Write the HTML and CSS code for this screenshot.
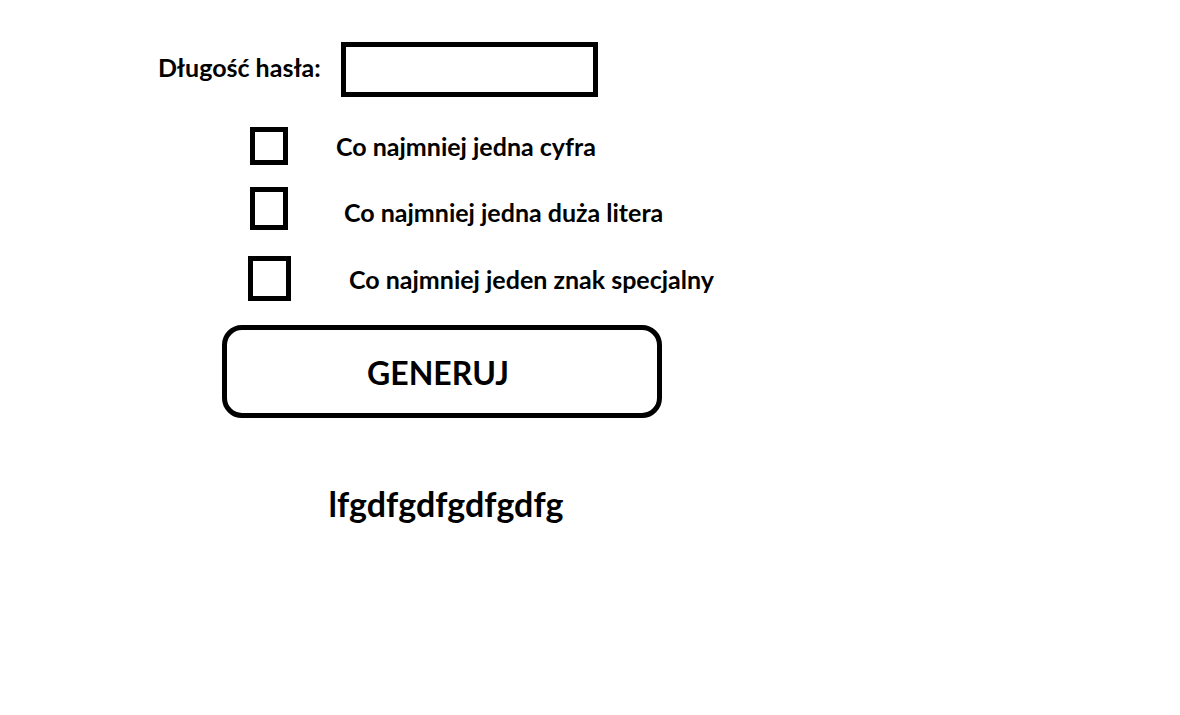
FILE: index.html
```html
<!DOCTYPE html>
<html lang="pl">
<head>
<meta charset="utf-8">
<title>Generator haseł</title>
<link rel="stylesheet" href="styles.css">
</head>
<body>
<form class="generator">
  <div class="length-row">
    <label class="label" for="length">Długość hasła:</label>
    <input class="length-input" id="length" type="text">
  </div>
  <div class="options">
    <div class="option option-digit">
      <input class="box" id="digit" type="checkbox">
      <label class="label" for="digit">Co najmniej jedna cyfra</label>
    </div>
    <div class="option option-upper">
      <input class="box" id="upper" type="checkbox">
      <label class="label" for="upper">Co najmniej jedna duża litera</label>
    </div>
    <div class="option option-special">
      <input class="box" id="special" type="checkbox">
      <label class="label" for="special">Co najmniej jeden znak specjalny</label>
    </div>
  </div>
  <button class="generate" type="button">GENERUJ</button>
  <output class="result">lfgdfgdfgdfgdfg</output>
</form>
</body>
</html>
```
FILE: styles.css
```css
* {
  box-sizing: border-box;
}

body {
  margin: 0;
  background: #fff;
  color: #000;
  font-family: Lato, "Noto Sans", sans-serif;
  font-weight: 700;
}

.generator {
  max-width: 820px;
  padding: 42px 20px 40px 158px;
}

.label {
  font-size: 25px;
  line-height: 32px;
  white-space: nowrap;
}

.length-row {
  display: flex;
  align-items: center;
  gap: 20px;
}

.length-row .label {
  padding-bottom: 6px;
}

.length-input {
  width: 257px;
  height: 55px;
  padding: 4px 12px;
  border: 5px solid #000;
  border-radius: 0;
  background: #fff;
  font: inherit;
  font-size: 25px;
}

.options {
  display: flex;
  flex-direction: column;
  padding: 30px 0 0 92px;
}

.option {
  display: flex;
  align-items: center;
}

.box {
  appearance: none;
  flex: none;
  width: 38px;
  margin: 0;
  border: 5px solid #000;
  background: #fff;
}

.box:checked {
  background: #000;
  box-shadow: inset 0 0 0 4px #fff;
}

.option-digit {
  gap: 48px;
  margin-bottom: 22px;
}

.option-digit .box {
  height: 38px;
}

.option-upper {
  gap: 56px;
  margin-bottom: 26px;
}

.option-upper .box {
  height: 43px;
}

.option-upper .label {
  padding-top: 6px;
}

.option-special {
  gap: 58px;
  margin-left: -2px;
}

.option-special .box {
  width: 43px;
  height: 45px;
}

.generate {
  display: block;
  width: 440px;
  height: 93px;
  margin: 24px 0 0 64px;
  padding: 2px 8px 0 0;
  border: 5px solid #000;
  border-radius: 20px;
  background: #fff;
  color: #000;
  font: inherit;
  font-size: 32px;
}

.result {
  display: block;
  width: 440px;
  margin: 64px 0 0 68px;
  font-size: 34px;
  line-height: 44px;
  text-align: center;
}
```
